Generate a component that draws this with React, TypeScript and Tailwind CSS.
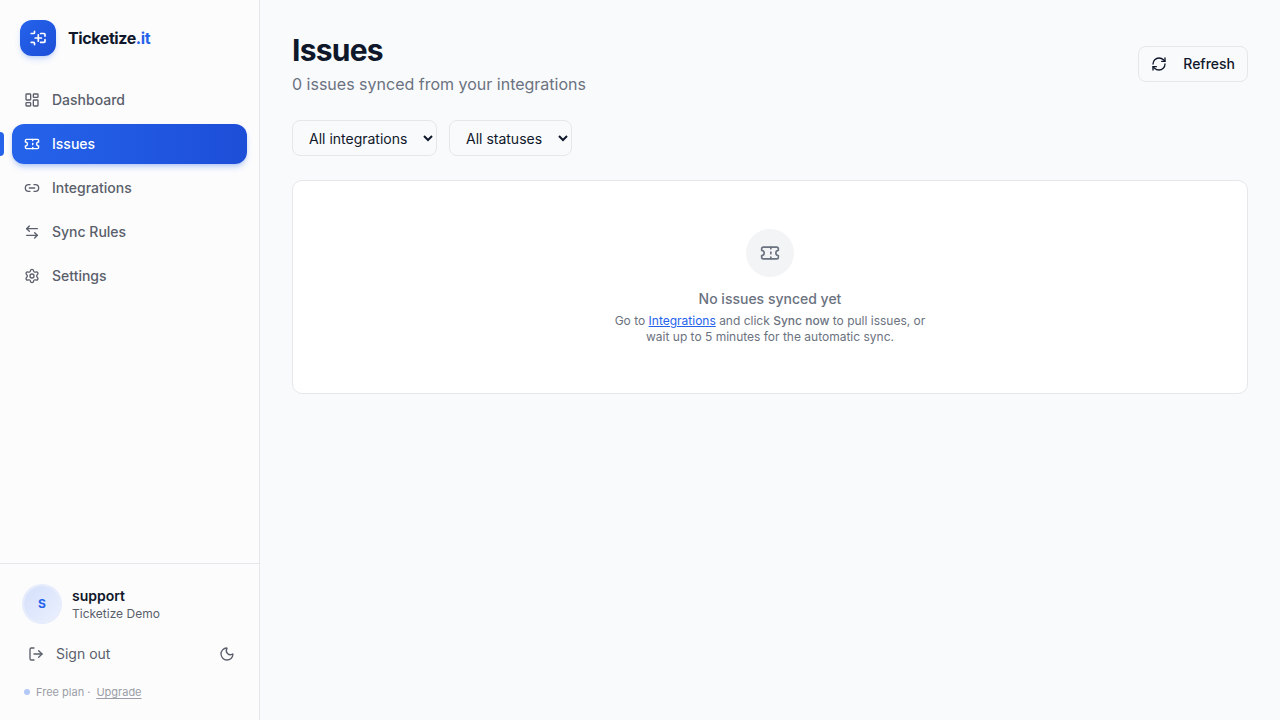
import {
  ArrowLeftRight,
  LayoutDashboard,
  Link2,
  LogOut,
  Moon,
  RefreshCw,
  Settings,
  Ticket,
  type LucideIcon,
} from 'lucide-react'

interface NavEntry {
  label: string
  href: string
  icon: LucideIcon
  active?: boolean
}

const NAV: NavEntry[] = [
  { label: 'Dashboard', href: '#dashboard', icon: LayoutDashboard },
  { label: 'Issues', href: '#issues', icon: Ticket, active: true },
  { label: 'Integrations', href: '#integrations', icon: Link2 },
  { label: 'Sync Rules', href: '#sync-rules', icon: ArrowLeftRight },
  { label: 'Settings', href: '#settings', icon: Settings },
]

function Logo() {
  return (
    <svg
      viewBox="0 0 20 20"
      className="size-5"
      fill="none"
      stroke="currentColor"
      strokeWidth="1.7"
      strokeLinecap="round"
      strokeLinejoin="round"
      aria-hidden="true"
    >
      <path d="M3.2 5.5h2.3a1 1 0 0 0 1-1V3.4" />
      <path d="M3.2 14.3h2.3a1 1 0 0 1 1 1v1.3" />
      <path d="M12.6 5.5h3.4a1 1 0 0 1 1 1v1.6" />
      <path d="M12.6 14.3h3.4a1 1 0 0 0 1-1v-1.6" />
      <path d="M10.3 6.8v6.4M7.2 10h6.2" />
    </svg>
  )
}

function NavItem({ label, href, icon: Icon, active }: NavEntry) {
  return (
    <a
      href={href}
      aria-current={active ? 'page' : undefined}
      className={
        active
          ? 'relative flex h-10 items-center gap-3 rounded-xl bg-gradient-to-r from-[#2563eb] to-[#1d4ed8] px-3 text-sm font-medium text-white shadow-md shadow-[#2563eb]/25'
          : 'flex h-10 items-center gap-3 rounded-xl px-3 text-sm font-medium text-[#5a5f6b]'
      }
    >
      {active && <span className="absolute top-2 -left-3 h-6 w-1 rounded-r-full bg-[#2563eb]" />}
      <Icon className="size-4" />
      {label}
    </a>
  )
}

function Sidebar() {
  return (
    <aside className="flex w-65 shrink-0 flex-col border-r border-[#e5e7eb] bg-[#fcfcfd]">
      <div className="flex items-center gap-3 p-5">
        <div className="flex size-9 items-center justify-center rounded-xl bg-gradient-to-br from-[#2563eb] to-[#1d4ed8] text-white shadow-md shadow-[#2563eb]/20">
          <Logo />
        </div>
        <span className="font-bold tracking-tight text-[#0f172a]">
          Ticketize<span className="text-[#2563eb]">.it</span>
        </span>
      </div>
      <nav className="flex flex-1 flex-col gap-1 px-3 py-1">
        {NAV.map((item) => (
          <NavItem key={item.label} {...item} />
        ))}
      </nav>
      <div className="border-t border-[#e5e7eb] px-3 py-4">
        <div className="flex items-center gap-3 px-3 py-1.5">
          <div className="flex size-9 items-center justify-center rounded-full bg-gradient-to-br from-[#d3dffb] to-[#ebf0fd] text-xs font-bold text-[#2563eb] ring-2 ring-[#e6ecfc]">
            S
          </div>
          <div>
            <p className="text-sm font-semibold text-[#0f172a]">support</p>
            <p className="text-xs text-[#5a5f6b]">Ticketize Demo</p>
          </div>
        </div>
        <div className="mt-2 flex items-center justify-between text-[#5a5f6b]">
          <button type="button" className="flex h-9 items-center gap-3 px-4 text-sm">
            <LogOut className="size-4" />
            Sign out
          </button>
          <button type="button" aria-label="Toggle theme" className="flex h-9 w-10 items-center justify-center">
            <Moon className="size-4" />
          </button>
        </div>
        <p className="mt-2 flex items-center gap-1.5 px-3 py-1 text-[11px] leading-4 text-[#9b9ea6]">
          <span className="size-1.5 rounded-full bg-[#b3c8f8]" />
          Free plan ·
          <a href="#upgrade" className="underline underline-offset-2">
            Upgrade
          </a>
        </p>
      </div>
    </aside>
  )
}

const selectClass =
  'h-9 rounded-lg border border-[#e5e7eb] bg-[#f9fafc] px-3 text-sm text-[#0f172a]'

export default function App() {
  return (
    <div className="flex min-h-screen bg-[#f9fafc] font-['Inter',sans-serif] text-[#0f172a]">
      <Sidebar />
      <main className="flex-1 p-8">
        <header className="flex items-center justify-between">
          <div>
            <h1 className="text-3xl font-bold tracking-tight">Issues</h1>
            <p className="mt-1 text-[#6b7280]">0 issues synced from your integrations</p>
          </div>
          <button
            type="button"
            className="flex h-9 items-center gap-4 rounded-lg border border-[#e5e7eb] px-3 text-sm font-medium"
          >
            <RefreshCw className="size-4" />
            Refresh
          </button>
        </header>
        <div className="mt-6 flex gap-3">
          <select aria-label="Integration" className={selectClass}>
            <option>All integrations</option>
          </select>
          <select aria-label="Status" className={selectClass}>
            <option>All statuses</option>
          </select>
        </div>
        <section className="mt-6 flex flex-col items-center rounded-[10px] border border-[#e5e7eb] bg-white py-12 text-center text-[#6b7280]">
          <div className="flex size-12 items-center justify-center rounded-full bg-[#f3f4f6]">
            <Ticket className="size-5" />
          </div>
          <h2 className="mt-3 text-sm font-medium">No issues synced yet</h2>
          <p className="mt-1 max-w-xs text-xs">
            Go to{' '}
            <a href="#integrations" className="text-[#2563eb] underline">
              Integrations
            </a>{' '}
            and click <strong className="font-medium">Sync now</strong> to pull issues, or wait up to 5 minutes for
            the automatic sync.
          </p>
        </section>
      </main>
    </div>
  )
}
